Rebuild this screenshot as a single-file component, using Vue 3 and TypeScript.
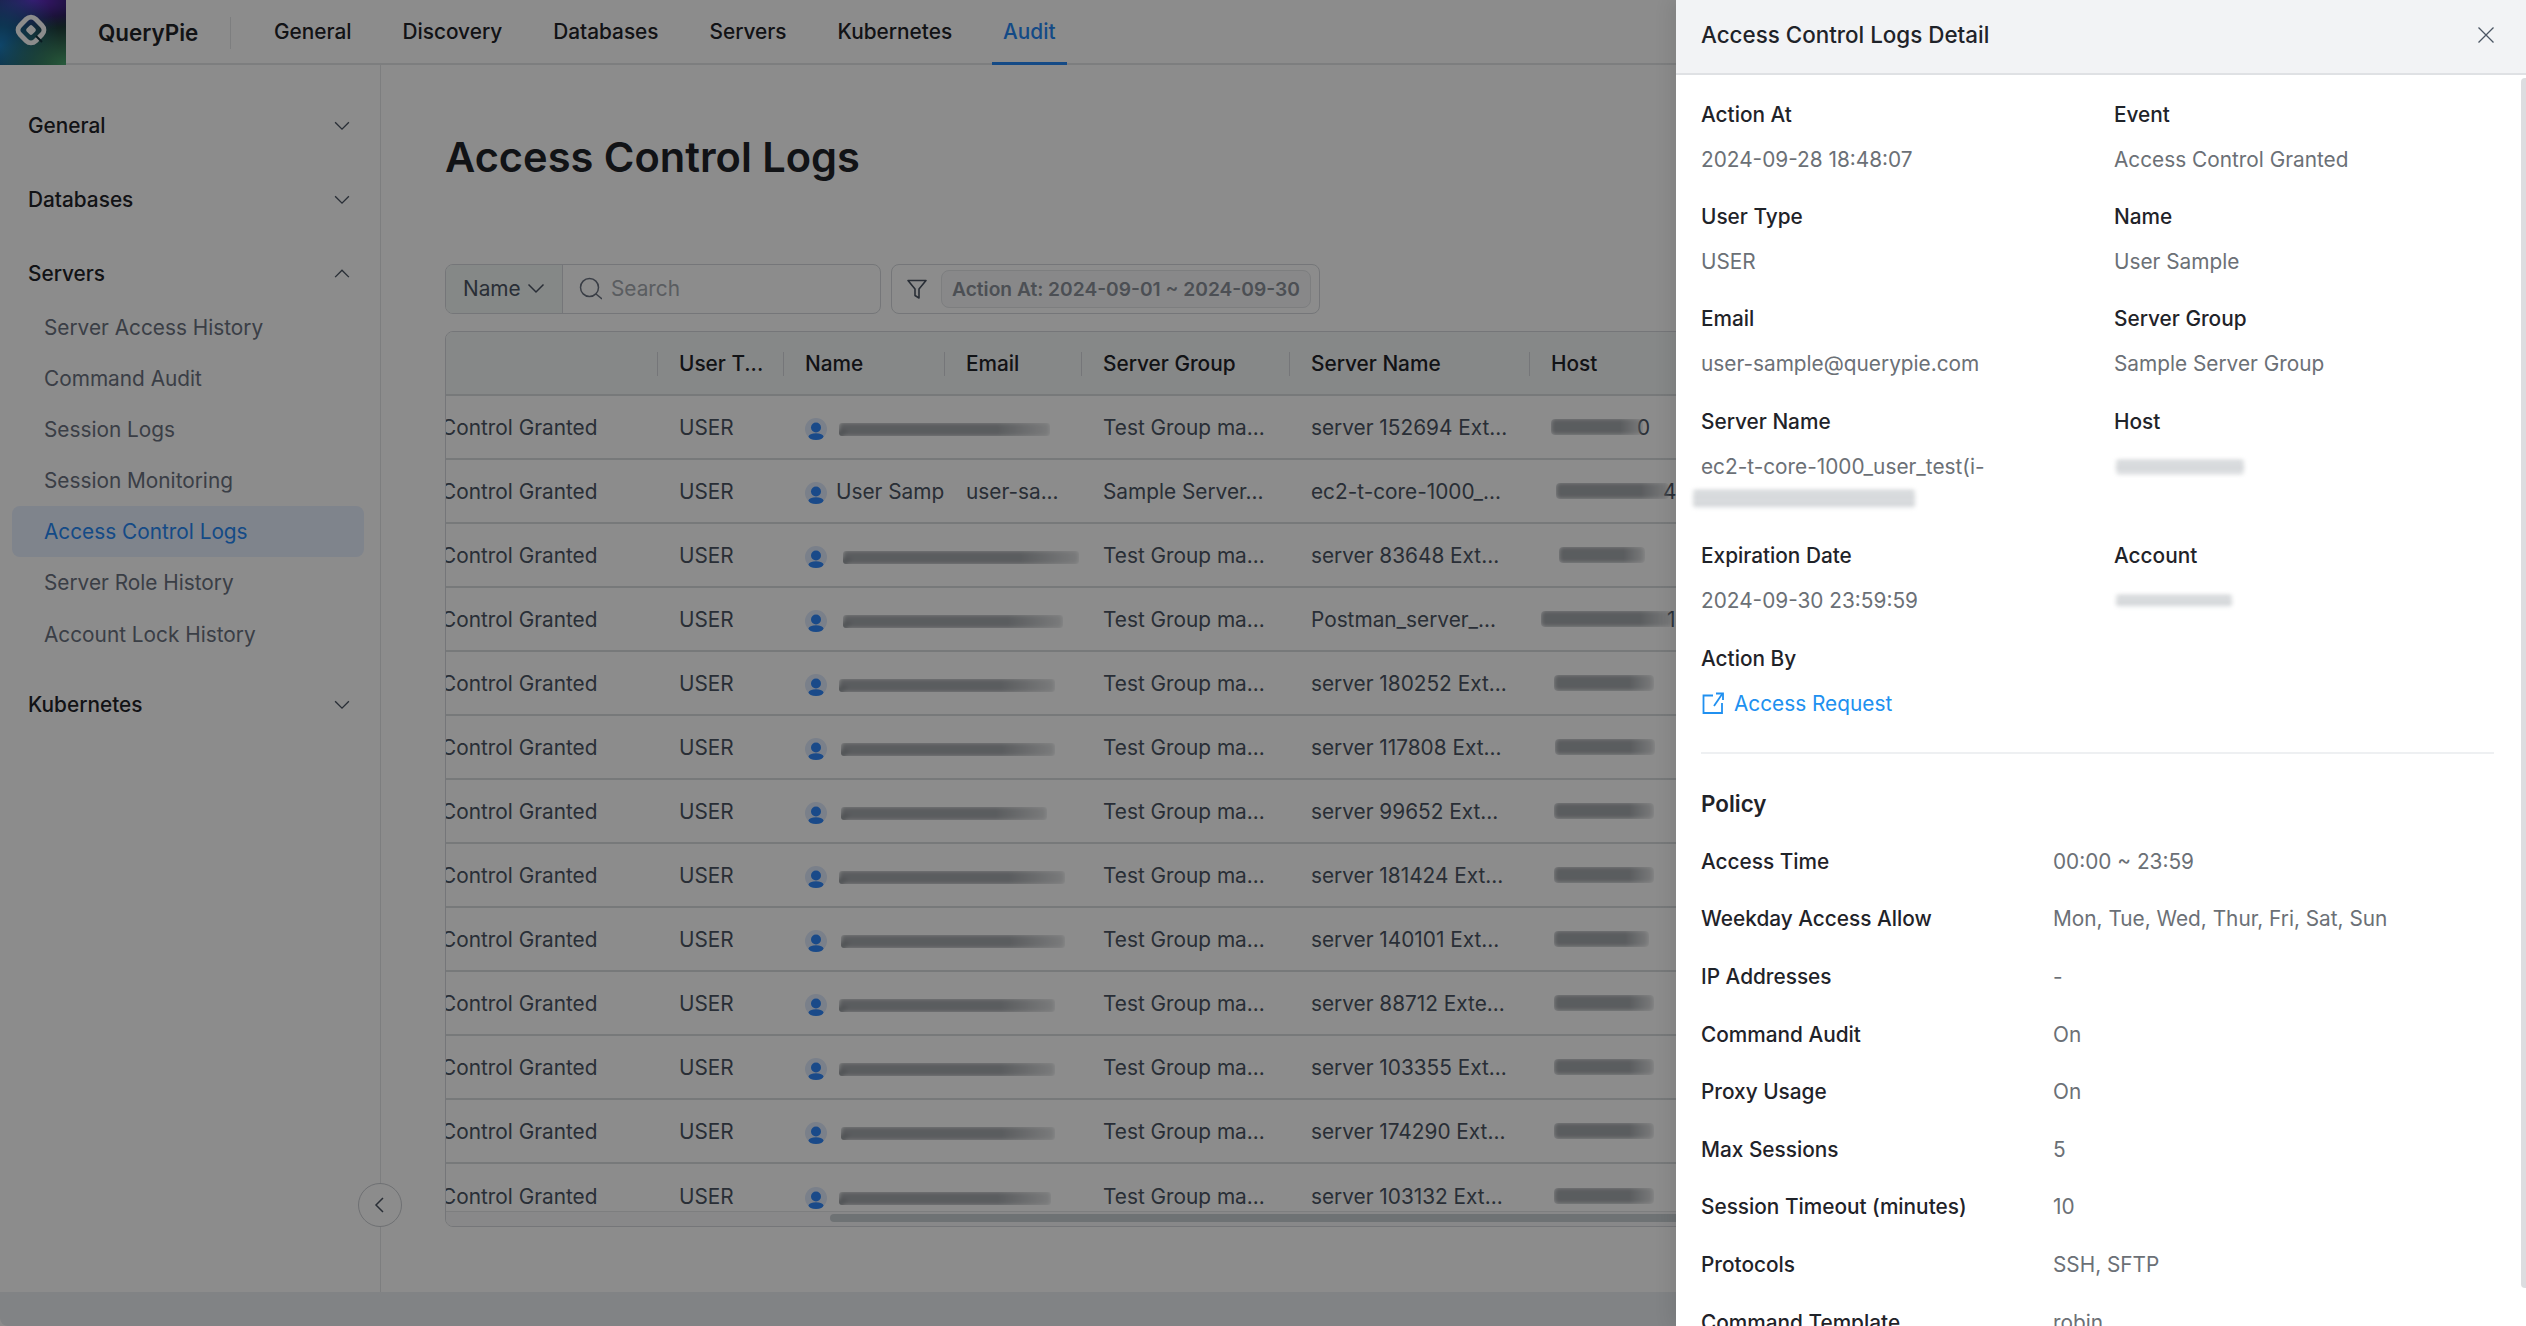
<script setup lang="ts">
const navItems = ['General', 'Discovery', 'Databases', 'Servers', 'Kubernetes', 'Audit']
const subItems = ['Server Access History', 'Command Audit', 'Session Logs', 'Session Monitoring', 'Access Control Logs', 'Server Role History', 'Account Lock History']

interface Row { group: string; server: string; nameW: number; nameX: number; hostW: number; hostX: number; user?: string; email?: string; tail?: string }
const rows: Row[] = [
  { group: 'Test Group ma...', server: 'server 152694 Ext...', nameX: 3, nameW: 211, hostX: 22, hostW: 92, tail: '0' },
  { group: 'Sample Server...', server: 'ec2-t-core-1000_...', user: 'User Samp', email: 'user-sa...', nameX: 0, nameW: 0, hostX: 27, hostW: 113, tail: '4' },
  { group: 'Test Group ma...', server: 'server 83648 Ext...', nameX: 7, nameW: 236, hostX: 30, hostW: 86 },
  { group: 'Test Group ma...', server: 'Postman_server_...', nameX: 7, nameW: 220, hostX: 12, hostW: 132, tail: '1' },
  { group: 'Test Group ma...', server: 'server 180252 Ext...', nameX: 3, nameW: 216, hostX: 25, hostW: 100 },
  { group: 'Test Group ma...', server: 'server 117808 Ext...', nameX: 5, nameW: 214, hostX: 26, hostW: 100 },
  { group: 'Test Group ma...', server: 'server 99652 Ext...', nameX: 5, nameW: 206, hostX: 25, hostW: 100 },
  { group: 'Test Group ma...', server: 'server 181424 Ext...', nameX: 3, nameW: 226, hostX: 25, hostW: 100 },
  { group: 'Test Group ma...', server: 'server 140101 Ext...', nameX: 5, nameW: 224, hostX: 25, hostW: 95 },
  { group: 'Test Group ma...', server: 'server 88712 Exte...', nameX: 3, nameW: 216, hostX: 25, hostW: 100 },
  { group: 'Test Group ma...', server: 'server 103355 Ext...', nameX: 3, nameW: 216, hostX: 25, hostW: 100 },
  { group: 'Test Group ma...', server: 'server 174290 Ext...', nameX: 5, nameW: 214, hostX: 25, hostW: 100 },
  { group: 'Test Group ma...', server: 'server 103132 Ext...', nameX: 3, nameW: 212, hostX: 25, hostW: 100 },
]

const policy: [string, string][] = [
  ['Access Time', '00:00 ~ 23:59'],
  ['Weekday Access Allow', 'Mon, Tue, Wed, Thur, Fri, Sat, Sun'],
  ['IP Addresses', '-'],
  ['Command Audit', 'On'],
  ['Proxy Usage', 'On'],
  ['Max Sessions', '5'],
  ['Session Timeout (minutes)', '10'],
  ['Protocols', 'SSH, SFTP'],
  ['Command Template', 'robin'],
]
</script>

<template>
  <div class="app">
    <header class="top">
      <div class="logo">
        <svg width="38" height="38" viewBox="0 0 38 38" fill="none">
          <rect x="8" y="8" width="22" height="22" rx="6.500" transform="rotate(45 19 19)" stroke="#fff" stroke-width="5" />
          <rect x="15" y="15" width="8" height="8" rx="2" transform="rotate(45 19 19)" fill="#fff" />
          <path d="M24 25l6 6" stroke="#10303a" stroke-width="2" />
        </svg>
      </div>
      <div class="brand">QueryPie</div>
      <nav class="nav">
        <a v-for="n in navItems" :key="n" class="nav-item" :class="{ on: n === 'Audit' }">{{ n }}</a>
      </nav>
    </header>

    <div class="main">
      <aside class="side">
        <div class="side-head"><span>General</span><svg class="chev" viewBox="0 0 16 16"><path d="M2.500 5 8 10.500 13.500 5" /></svg></div>
        <div class="side-head"><span>Databases</span><svg class="chev" viewBox="0 0 16 16"><path d="M2.500 5 8 10.500 13.500 5" /></svg></div>
        <div class="side-head open"><span>Servers</span><svg class="chev" viewBox="0 0 16 16"><path d="M2.500 10.500 8 5l5.500 5.500" /></svg></div>
        <ul class="subs">
          <li v-for="s in subItems" :key="s" class="sub" :class="{ on: s === 'Access Control Logs' }">{{ s }}</li>
        </ul>
        <div class="side-head"><span>Kubernetes</span><svg class="chev" viewBox="0 0 16 16"><path d="M2.500 5 8 10.500 13.500 5" /></svg></div>
        <button class="collapse" type="button" aria-label="Collapse">
          <svg width="20" height="20" viewBox="0 0 20 20" fill="none"><path d="M13 3 6 10l7 7" stroke="#4b5563" stroke-width="1.500" /></svg>
        </button>
      </aside>

      <section class="content">
        <h1 class="title">Access Control Logs</h1>
        <div class="tools">
          <div class="search">
            <div class="sel">Name<svg width="22" height="22" viewBox="0 0 22 22" fill="none"><path d="M3.500 7.500 11 15l7.500-7.500" stroke="#4b5563" stroke-width="1.500" /></svg></div>
            <div class="inp">
              <svg width="24" height="24" viewBox="0 0 24 24" fill="none" stroke="#6b7280" stroke-width="1.500"><circle cx="11.500" cy="11.500" r="9" /><path d="m18 18 6 5" /></svg>
              <span>Search</span>
            </div>
          </div>
          <div class="filter">
            <svg width="22" height="22" viewBox="0 0 22 22" fill="none" stroke="#4b5563" stroke-width="1.600" stroke-linejoin="round"><path d="M2 2.500h18l-7 8.500v9l-4-2.500V11z" /></svg>
            <div class="tag">Action At: 2024-09-01 ~ 2024-09-30</div>
          </div>
        </div>

        <div class="table">
          <div class="inner">
            <div class="row head">
              <div class="c ev"></div>
              <div class="c ut">User T...</div>
              <div class="c nm">Name</div>
              <div class="c em">Email</div>
              <div class="c gr">Server Group</div>
              <div class="c sv">Server Name</div>
              <div class="c ho">Host</div>
            </div>
            <div v-for="(r, i) in rows" :key="i" class="row">
              <div class="c ev">Access Control Granted</div>
              <div class="c ut">USER</div>
              <div class="c nm open-cell">
                <svg class="avatar" width="22" height="22" viewBox="0 0 22 22">
                  <circle cx="11" cy="11" r="11" fill="#dfe9fb" />
                  <circle cx="11" cy="9.500" r="5" fill="#3088fa" />
                  <ellipse cx="11" cy="18.600" rx="7.500" ry="3.400" fill="#3088fa" />
                </svg>
                <span v-if="r.user" class="uname">{{ r.user }}</span>
                <i v-else class="smear name" :style="{ marginLeft: 9 + r.nameX + 'px', width: r.nameW + 'px' }"></i>
              </div>
              <div class="c em">{{ r.email }}</div>
              <div class="c gr">{{ r.group }}</div>
              <div class="c sv">{{ r.server }}</div>
              <div class="c ho open-cell">
                <i class="smear host" :style="{ marginLeft: r.hostX - 22 + 'px', width: r.hostW + 'px' }"></i>
                <span v-if="r.tail" class="tail">{{ r.tail }}</span>
              </div>
            </div>
          </div>
          <div class="hscroll"><div class="thumb"></div></div>
        </div>
      </section>
    </div>

    <div class="strip"></div>

    <div class="mask"></div>

    <aside class="drawer">
      <div class="d-head">
        <span>Access Control Logs Detail</span>
        <svg width="20" height="20" viewBox="0 0 20 20" fill="none" stroke="#4b5563" stroke-width="1.300"><path d="M2.500 2.500l15 15M17.500 2.500l-15 15" /></svg>
      </div>
      <div class="d-body">
        <div class="grid">
          <div class="f"><div class="l">Action At</div><div class="v">2024-09-28 18:48:07</div></div>
          <div class="f"><div class="l">Event</div><div class="v">Access Control Granted</div></div>
          <div class="f"><div class="l">User Type</div><div class="v">USER</div></div>
          <div class="f"><div class="l">Name</div><div class="v">User Sample</div></div>
          <div class="f wider"><div class="l">Email</div><div class="v">user-sample@querypie.com</div></div>
          <div class="f wider"><div class="l">Server Group</div><div class="v">Sample Server Group</div></div>
          <div class="f">
            <div class="l">Server Name</div>
            <div class="v">ec2-t-core-1000_user_test(i-</div>
            <div class="v"><i class="smear light s1"></i></div>
          </div>
          <div class="f">
            <div class="l">Host</div>
            <div class="v low"><i class="smear light s2"></i></div>
          </div>
          <div class="f wider"><div class="l">Expiration Date</div><div class="v">2024-09-30 23:59:59</div></div>
          <div class="f wider">
            <div class="l">Account</div>
            <div class="v"><i class="smear light s3"></i></div>
          </div>
          <div class="f">
            <div class="l">Action By</div>
            <a class="v link">
              <svg width="24" height="24" viewBox="0 0 24 24" fill="none" stroke="#2090f0" stroke-width="1.800"><path d="M12 3.500H2.500V21H21V11" /><path d="M13 14 21.500 1.500" /><path d="M15 1.500h7V8" /></svg>
              Access Request
            </a>
          </div>
        </div>
        <hr class="rule" />
        <h2 class="p-title">Policy</h2>
        <div v-for="p in policy" :key="p[0]" class="p-row">
          <div class="l">{{ p[0] }}</div>
          <div class="v">{{ p[1] }}</div>
        </div>
      </div>
      <div class="d-scroll"></div>
    </aside>
  </div>
</template>

<style>
html, body { margin: 0; padding: 0; background: #000; }
</style>

<style scoped>
.app {
  position: relative;
  width: 2526px;
  height: 1326px;
  overflow: hidden;
  display: flex;
  flex-direction: column;
  background: #fff;
  font-family: Inter, "Liberation Sans", sans-serif;
  font-size: 20.800px;
  color: #1f2329;
}
.top {
  flex: 0 0 65px;
  height: 65px;
  display: flex;
  align-items: center;
  box-shadow: inset 0 -2px 0 #e3e5e8;
}
.logo {
  width: 66px;
  height: 65px;
  flex: none;
  display: flex;
  align-items: center;
  justify-content: center;
  padding: 0 4px 5px 0;
  box-sizing: border-box;
  background:
    radial-gradient(70px 50px at 100% 100%, #4aa66e 0%, rgba(74, 166, 110, 0) 100%),
    radial-gradient(60px 70px at 0% 70%, #1c7fc0 0%, rgba(28, 127, 192, 0) 100%),
    radial-gradient(70px 30px at 50% 0%, #6a2bd0 0%, rgba(106, 43, 208, 0) 100%),
    #101a2a;
}
.brand {
  margin-left: 32px;
  width: 133px;
  font-size: 22.400px;
  font-weight: 600;
  height: 32px;
  line-height: 32px;
  border-right: 1px solid #e3e5e8;
  box-sizing: border-box;
}
.nav { display: flex; align-self: stretch; margin-left: 43px; gap: 29px; }
.nav-item {
  display: flex;
  align-items: center;
  padding: 0 11px;
  margin-left: -11px;
  margin-right: 11px;
  font-weight: 500;
  height: 65px;
  box-sizing: border-box;
  padding-bottom: 2px;
}
.nav-item.on { color: #2688f5; border-bottom: 3px solid #2688f5; padding-bottom: 0; }
.main { flex: 1; display: flex; min-height: 0; }
.side {
  position: relative;
  width: 381px;
  flex: none;
  box-sizing: border-box;
  border-right: 1px solid #e3e5e8;
  padding: 35px 0 0 0;
}
.side-head {
  height: 51px;
  margin: 0 28px 23px 28px;
  display: flex;
  align-items: center;
  justify-content: space-between;
  font-weight: 500;
}
.side-head.open { margin-bottom: 2.500px; }
.chev { width: 20px; height: 20px; fill: none; stroke: #4b5563; stroke-width: 1.100; }
.subs { list-style: none; margin: 0 0 19.500px; padding: 0; }
.sub {
  height: 51.200px;
  line-height: 51.200px;
  margin: 0 16px 0 12px;
  padding-left: 32px;
  color: #6b7280;
  border-radius: 8px;
}
.sub.on { background: #e8f0ff; color: #2688f5; }
.collapse {
  position: absolute;
  left: 358px;
  top: 1118px;
  width: 44px;
  height: 44px;
  padding: 0;
  border: 1px solid #c9ccd1;
  border-radius: 50%;
  background: #fff;
  display: flex;
  align-items: center;
  justify-content: center;
}
.content { flex: 1; min-width: 0; padding-left: 64px; }
.title {
  margin: 0 0 77px;
  padding-top: 57px;
  height: 65px;
  line-height: 70px;
  font-size: 41.600px;
  font-weight: 600;
}
.tools { display: flex; gap: 10px; height: 50px; }
.search {
  width: 436px;
  box-sizing: border-box;
  border: 1px solid #d5d8dc;
  border-radius: 8px;
  display: flex;
  overflow: hidden;
}
.sel {
  width: 117px;
  box-sizing: border-box;
  background: #f2f7f6;
  border-right: 1px solid #d5d8dc;
  display: flex;
  align-items: center;
  padding: 0 0 2px 17px;
  gap: 4px;
  color: #4b5563;
}
.inp { flex: 1; display: flex; align-items: center; padding: 0 0 2px 15px; gap: 9px; color: #a4a9b0; }
.filter {
  width: 429px;
  box-sizing: border-box;
  border: 1px solid #d5d8dc;
  border-radius: 8px;
  display: flex;
  align-items: center;
  padding-left: 14px;
  gap: 13px;
}
.tag {
  width: 370px;
  height: 38px;
  line-height: 36px;
  box-sizing: border-box;
  padding-left: 10px;
  border: 1px solid #e3e5e8;
  border-radius: 8px;
  background: #f7f8f9;
  color: #8b9199;
  font-weight: 600;
  font-size: 19.200px;
  white-space: nowrap;
}
.table {
  margin-top: 17px;
  width: 1500px;
  height: 896px;
  box-sizing: border-box;
  border: 1px solid #d5d8dc;
  border-radius: 8px 0 0 8px;
  overflow: hidden;
  position: relative;
  isolation: isolate;
}
.inner { margin-left: -105px; }
.row {
  display: grid;
  grid-template-columns: 316px 126px 161px 137px 208px 240px 300px;
  height: 64px;
  align-items: center;
  box-sizing: border-box;
  border-bottom: 2px solid #d9dcdf;
  color: #4b5563;
  white-space: nowrap;
}
.row:last-of-type { border-bottom: 0; }
.row.head { background: #f5f7f7; color: #1f2329; font-weight: 500; }
.c { padding-left: 22px; overflow: hidden; display: flex; align-items: center; height: 100%; box-sizing: border-box; position: relative; }
.c.open-cell { overflow: visible; z-index: 1; }
.head .c::before {
  content: '';
  position: absolute;
  left: 0;
  top: 20px;
  height: 24px;
  width: 1px;
  background: #d5d8dc;
}
.head .ev::before { display: none; }
.avatar { flex: none; margin-top: 4px; }
.uname { margin-left: 9px; overflow: hidden; flex: none; width: 112px; }
.smear {
  display: block;
  flex: none;
  position: relative;
  height: 13px;
  margin-top: 4px;
  border-radius: 3px;
  background: repeating-linear-gradient(180deg, #8f9398 0 3px, #c6c9cc 3px 5px);
  -webkit-mask-image: linear-gradient(90deg, #000 75%, rgba(0, 0, 0, 0.35));
  mask-image: linear-gradient(90deg, #000 75%, rgba(0, 0, 0, 0.35));
  filter: blur(2px);
}
.smear.name::before {
  content: '';
  position: absolute;
  left: -4px;
  top: 8px;
  width: 12px;
  height: 12px;
  background: #989ca0;
  clip-path: polygon(0 0, 100% 0, 40% 100%, 0 100%);
}
.smear.host { height: 16px; margin-top: 0; border-radius: 4px; }
.tail { margin-left: -6px; color: #4b5563; }
.smear.light {
  background: repeating-linear-gradient(180deg, #c9cccf 0 3px, #e6e8ea 3px 6px);
  -webkit-mask-image: none;
  mask-image: none;
}
.s1 { width: 222px; height: 18px; margin-left: -8px; }
.s2 { width: 128px; height: 14px; margin-left: 2px; }
.s3 { width: 116px; height: 12px; margin-left: 2px; }
.hscroll { position: absolute; left: 0; right: 0; bottom: 0; height: 14px; background: #f7f8f9; border-top: 1px solid #e3e5e8; z-index: 2; }
.thumb { position: absolute; left: 384px; top: 2px; right: 0; height: 8px; background: #c9cfd4; border-radius: 4px 0 0 4px; }
.strip { flex: 0 0 34px; background: #eceef2; border-bottom-left-radius: 8px; }
.mask { position: absolute; inset: 0; background: rgba(0, 0, 0, 0.45); }
.drawer {
  position: absolute;
  top: 0;
  right: 0;
  bottom: 0;
  width: 850px;
  background: #fff;
  box-shadow: -6px 0 16px rgba(0, 0, 0, 0.08);
  overflow: hidden;
}
.d-head {
  height: 75px;
  box-sizing: border-box;
  background: #f2f3f5;
  border-bottom: 2px solid #dfe1e4;
  display: flex;
  align-items: center;
  justify-content: space-between;
  padding: 0 30px 4px 25px;
  font-size: 22.400px;
  font-weight: 500;
}
.d-body { padding: 24px 32px 0 25px; }
.grid { display: grid; grid-template-columns: 413px 1fr; column-gap: 0; }
.f { margin-bottom: 25px; }
.f.wider { margin-bottom: 26px; }
.l { height: 32px; line-height: 32px; font-weight: 500; color: #1f2329; white-space: nowrap; }
.f .l { margin-bottom: 13px; }
.v { display: flow-root; height: 32px; line-height: 32px; color: #6b7076; white-space: nowrap; }
.v.low { margin-top: 15px; }
.v .smear { margin-top: 7px; }
.v .s3 { margin-top: 10px; }
.v.link { display: flex; align-items: center; gap: 9px; color: #2090f0; }
.rule { border: 0; border-top: 2px solid #eef0f2; margin: 7px 0 34px; }
.p-title { margin: 0 0 13px; height: 32px; line-height: 32px; font-size: 22.400px; font-weight: 600; }
.p-row { display: flex; height: 57.600px; align-items: center; }
.p-row .l { width: 352px; }
.d-scroll { position: absolute; right: 0; top: 78px; height: 1210px; width: 5px; background: #dcdde0; border-radius: 4px 0 0 4px; }
</style>
